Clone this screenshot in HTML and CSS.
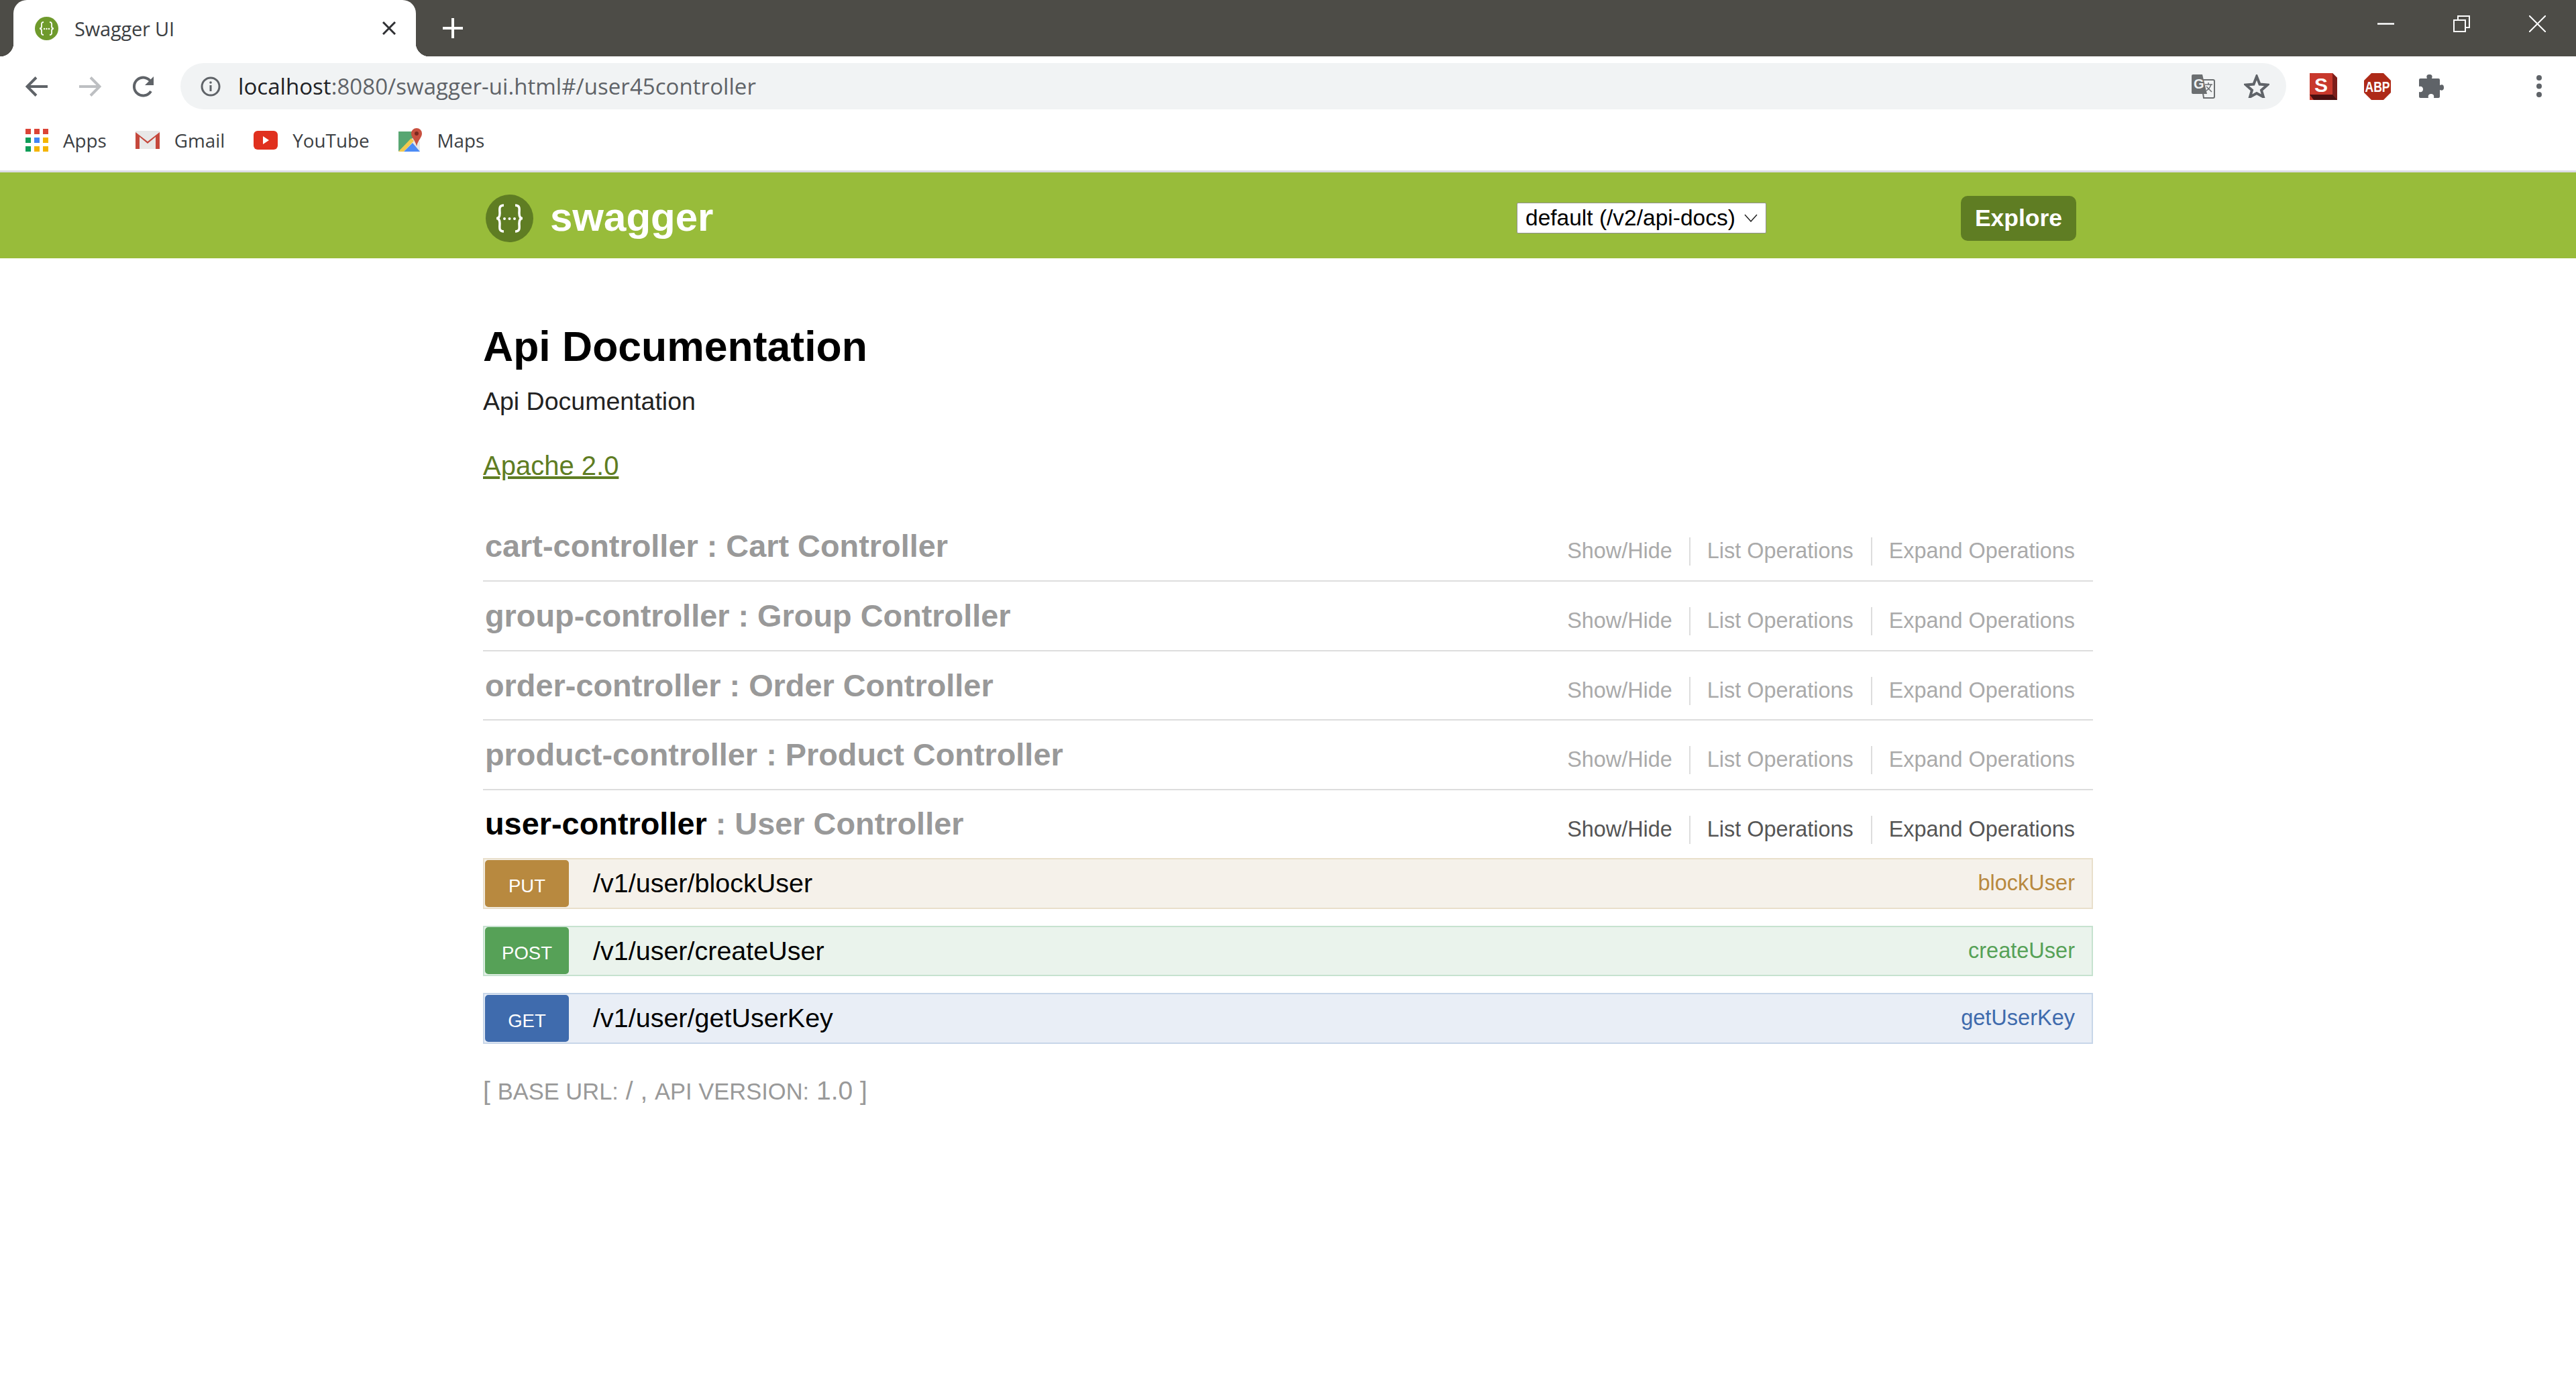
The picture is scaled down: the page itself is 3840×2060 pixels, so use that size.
FILE: index.html
```html
<!DOCTYPE html>
<html lang="en">
<head>
    <meta charset="utf-8"/>
    <title>Swagger UI</title>
    <link rel="stylesheet" href="styles.css">
</head>
<body>
    <div class="tabstrip">
        <div class="tab">
            <svg class="favicon" width="35" height="35" viewBox="0 0 35 35">
                <circle cx="17.5" cy="17.5" r="17.5" fill="#6f9a2c"/>
                <path d="M13 8c-4 0-3 3-3 6 0 3-1 3.500-3 3.500 2 0 3 .5 3 3.500 0 3-1 6 3 6M22 8c4 0 3 3 3 6 0 3 1 3.500 3 3.500-2 0-3 .5-3 3.500 0 3 1 6-3 6" fill="none" stroke="#fff" stroke-width="1.800"/>
                <circle cx="14" cy="18" r="1.200" fill="#fff"/><circle cx="17.500" cy="18" r="1.200" fill="#fff"/><circle cx="21" cy="18" r="1.200" fill="#fff"/>
            </svg>
            <span class="tab-title">Swagger UI</span>
            <svg class="tab-close" width="20" height="20" viewBox="0 0 20 20"><path d="M1 1l18 18M19 1L1 19" stroke="#2f3033" stroke-width="3"/></svg>
        </div>
        <svg class="new-tab" width="30" height="30" viewBox="0 0 30 30"><path d="M15 0v30M0 15h30" stroke="#fff" stroke-width="4"/></svg>
        <div class="window-controls">
            <svg width="25" height="25" viewBox="0 0 25 25"><path d="M0 12.500h25" stroke="#fff" stroke-width="2.500"/></svg>
            <svg width="25" height="25" viewBox="0 0 25 25"><path d="M1 7h17v17H1zM7 7V1h17v17h-6" fill="none" stroke="#fff" stroke-width="2"/></svg>
            <svg width="25" height="25" viewBox="0 0 25 25"><path d="M0 0l25 25M25 0L0 25" stroke="#fff" stroke-width="2"/></svg>
        </div>
    </div>

    <div class="toolbar">
        <svg class="nav-icon" width="33" height="30" viewBox="0 0 33 30"><path d="M33 15H3M16 1.500L2.500 15 16 28.500" fill="none" stroke="#5f6368" stroke-width="4"/></svg>
        <svg class="nav-icon" width="33" height="30" viewBox="0 0 33 30"><path d="M0 15h30M17 1.500L30.500 15 17 28.500" fill="none" stroke="#bdbfc2" stroke-width="4"/></svg>
        <svg class="nav-icon" width="33" height="32" viewBox="0 0 33 32"><path d="M27 23a13.500 13.500 0 1 1 0-14" fill="none" stroke="#5f6368" stroke-width="4"/><path d="M31 1v13H18z" fill="#5f6368"/></svg>
        <div class="omnibox">
            <svg class="info-icon" width="30" height="30" viewBox="0 0 30 30"><circle cx="15" cy="15" r="13" fill="none" stroke="#5f6368" stroke-width="3"/><path d="M15 13v9" stroke="#5f6368" stroke-width="3"/><circle cx="15" cy="9" r="1.800" fill="#5f6368"/></svg>
            <span class="url"><span class="url-host">localhost</span>:8080/swagger-ui.html#/user45controller</span>
            <svg class="translate-icon" width="35" height="36" viewBox="0 0 35 36">
                <path d="M14 8h18a2 2 0 0 1 2 2v23a2 2 0 0 1-2 2H18z" fill="#f1f3f4" stroke="#6b6e70" stroke-width="2"/>
                <path d="M2 0h14l7 29H2a2 2 0 0 1-2-2V2a2 2 0 0 1 2-2z" fill="#6b6e70"/>
                <text x="3" y="21" class="translate-g">G</text>
                <path d="M20 15h11M25 12v3M29 15c-2 6-5 8-7 9M22 18l8 8" fill="none" stroke="#6b6e70" stroke-width="1.500"/>
            </svg>
            <svg class="star-icon" width="38" height="35" viewBox="0 0 38 35"><path d="M19 3l4.500 11.500L35 15.500l-9 8 3 10L19 28 9 33.500l3-10-9-8 11.500-1z" fill="none" stroke="#5f6368" stroke-width="4"/></svg>
        </div>
        <svg class="ext-s" width="41" height="40" viewBox="0 0 41 40">
            <path d="M0 0h34l7 7v33H0z" fill="#c8382c"/>
            <path d="M34 0l7 7v33h-7z" fill="#7d1d1a"/>
            <path d="M0 32h34l7 8H6z" fill="#4a0f10"/>
            <text x="17" y="28" class="ext-s-letter">S</text>
        </svg>
        <svg class="ext-abp" width="40" height="40" viewBox="0 0 40 40">
            <path d="M11 0h18l11 11v18L29 40H11L0 29V11z" fill="#ae2a18"/>
            <text transform="translate(20 28) scale(.8 1)" class="ext-abp-text">ABP</text>
        </svg>
        <svg class="ext-puzzle" width="37" height="35" viewBox="0 0 37 35"><path d="M2 6h10c-2-5 1-6 3.500-6S21 1 19 6h10a2 2 0 0 1 2 2v8c5-2 6 1 6 3.500S36 25 31 23v10a2 2 0 0 1-2 2h-7c1-4-1-6-4-6s-5 2-4 6H2a2 2 0 0 1-2-2v-7c4 1 6-1 6-4s-2-5-6-4V8a2 2 0 0 1 2-2z" fill="#5f6368"/></svg>
        <svg class="menu-dots" width="8" height="33" viewBox="0 0 8 33"><circle cx="4" cy="4" r="4" fill="#5f6368"/><circle cx="4" cy="16.500" r="4" fill="#5f6368"/><circle cx="4" cy="29" r="4" fill="#5f6368"/></svg>
    </div>

    <div class="bookmarks">
        <div class="bookmark">
            <svg width="34" height="34" viewBox="0 0 34 34">
                <path d="M0 0h8v8H0z" fill="#db4437"/><path d="M13 0h8v8h-8z" fill="#db4437"/><path d="M26 0h8v8h-8z" fill="#db4437"/>
                <path d="M0 13h8v8H0z" fill="#0f9d58"/><path d="M13 13h8v8h-8z" fill="#4285f4"/><path d="M26 13h8v8h-8z" fill="#f4b400"/>
                <path d="M0 26h8v8H0z" fill="#0f9d58"/><path d="M13 26h8v8h-8z" fill="#f4b400"/><path d="M26 26h8v8h-8z" fill="#f4b400"/>
            </svg>
            <span>Apps</span>
        </div>
        <div class="bookmark">
            <svg width="36" height="27" viewBox="0 0 36 27">
                <path d="M0 0h36v27H0z" fill="#e8e8e8"/>
                <path d="M0 2l18 14L36 2v25h-6V9L18 19 6 9v18H0z" fill="#c5483c"/>
            </svg>
            <span>Gmail</span>
        </div>
        <div class="bookmark">
            <svg width="36" height="28" viewBox="0 0 36 28"><rect width="36" height="28" rx="6" fill="#e0301e"/><path d="M14 8l9 6-9 6z" fill="#fff"/></svg>
            <span>YouTube</span>
        </div>
        <div class="bookmark">
            <svg width="36" height="35" viewBox="0 0 36 35">
                <path d="M0 5h24v30H0z" fill="#58a672"/>
                <path d="M0 35L24 12l8 8v15z" fill="#e9e9e9"/>
                <path d="M0 35L19 15l4 4L8 35z" fill="#f2c94c"/>
                <path d="M8 35l13-13 11 13z" fill="#4c8bf5"/>
                <path d="M27 0a8 8 0 0 1 8 8c0 6-6 10-8 19-2-9-8-13-8-19a8 8 0 0 1 8-8z" fill="#c8503f"/>
                <circle cx="27" cy="8" r="3" fill="#7a2a20"/>
            </svg>
            <span>Maps</span>
        </div>
    </div>

    <header class="swagger-header">
        <div class="container header-inner">
            <svg class="logo" width="71" height="71" viewBox="0 0 71 71">
                <circle cx="35.500" cy="35.500" r="35.500" fill="#5f7d23"/>
                <path d="M27 16c-8 0-6 6-6 12 0 5-2 7.500-5 7.500 3 0 5 2.500 5 7.500 0 6-2 12 6 12M44 16c8 0 6 6 6 12 0 5 2 7.500 5 7.500-3 0-5 2.500-5 7.500 0 6 2 12-6 12" fill="none" stroke="#fff" stroke-width="3.500"/>
                <circle cx="28" cy="36" r="2" fill="#fff"/><circle cx="35.500" cy="36" r="2" fill="#fff"/><circle cx="43" cy="36" r="2" fill="#fff"/>
            </svg>
            <span class="logo-text">swagger</span>
            <div class="spec-select">
                <span>default (/v2/api-docs)</span>
                <svg width="20" height="12" viewBox="0 0 20 12"><path d="M1 1l9 10 9-10" fill="none" stroke="#222" stroke-width="1.500"/></svg>
            </div>
            <a class="explore">Explore</a>
        </div>
    </header>

    <main class="container">
        <h1>Api Documentation</h1>
        <p class="description">Api Documentation</p>
        <p class="license"><a>Apache 2.0</a></p>

        <div class="resource">
            <h2><span class="res-name">cart-controller</span> : Cart Controller</h2>
            <ul class="res-links"><li>Show/Hide</li><li>List Operations</li><li>Expand Operations</li></ul>
        </div>
        <div class="resource">
            <h2><span class="res-name">group-controller</span> : Group Controller</h2>
            <ul class="res-links"><li>Show/Hide</li><li>List Operations</li><li>Expand Operations</li></ul>
        </div>
        <div class="resource">
            <h2><span class="res-name">order-controller</span> : Order Controller</h2>
            <ul class="res-links"><li>Show/Hide</li><li>List Operations</li><li>Expand Operations</li></ul>
        </div>
        <div class="resource">
            <h2><span class="res-name">product-controller</span> : Product Controller</h2>
            <ul class="res-links"><li>Show/Hide</li><li>List Operations</li><li>Expand Operations</li></ul>
        </div>
        <div class="resource active">
            <h2><span class="res-name">user-controller</span> : User Controller</h2>
            <ul class="res-links"><li>Show/Hide</li><li>List Operations</li><li>Expand Operations</li></ul>
        </div>

        <div class="operations">
            <div class="op op-put">
                <span class="method">PUT</span>
                <span class="path">/v1/user/blockUser</span>
                <span class="op-name">blockUser</span>
            </div>
            <div class="op op-post">
                <span class="method">POST</span>
                <span class="path">/v1/user/createUser</span>
                <span class="op-name">createUser</span>
            </div>
            <div class="op op-get">
                <span class="method">GET</span>
                <span class="path">/v1/user/getUserKey</span>
                <span class="op-name">getUserKey</span>
            </div>
        </div>

        <p class="footer">[ <span class="footer-label">BASE URL:</span> / , <span class="footer-label">API VERSION:</span> 1.0 ]</p>
    </main>
</body>
</html>
```

FILE: styles.css
```css
body {
    margin: 0;
    background: #fff;
    font-family: "Liberation Sans", Arial, sans-serif;
    color: #000;
}

/* browser chrome */
.tabstrip {
    display: flex;
    align-items: center;
    height: 84px;
    background: #4d4c47;
}
.tab {
    position: relative;
    display: flex;
    align-items: center;
    box-sizing: border-box;
    width: 600px;
    height: 84px;
    margin-left: 20px;
    padding: 0 30px 0 32px;
    background: #fff;
    border-radius: 20px 20px 0 0;
}
.tab::before,
.tab::after {
    content: "";
    position: absolute;
    bottom: 0;
    width: 20px;
    height: 20px;
}
.tab::before {
    left: -20px;
    background: radial-gradient(circle at 0 0, #4d4c47 20px, #fff 20.5px);
}
.tab::after {
    right: -20px;
    background: radial-gradient(circle at 100% 0, #4d4c47 20px, #fff 20.5px);
}
.tab-title {
    margin-left: 24px;
    font-family: "Open Sans", sans-serif;
    font-size: 29px;
    letter-spacing: -0.2px;
    color: #3c4043;
}
.tab-close {
    margin-left: auto;
}
.new-tab {
    margin-left: 40px;
}
.window-controls {
    display: flex;
    gap: 88px;
    margin-left: auto;
    margin-right: 45px;
    padding-bottom: 13px;
}
.toolbar {
    display: flex;
    align-items: center;
    height: 89px;
    padding: 0 51px 0 38px;
}
.nav-icon {
    margin-right: 47px;
    flex: none;
}
.nav-icon:nth-child(3) {
    margin-right: 38px;
}
.omnibox {
    display: flex;
    align-items: center;
    flex: none;
    box-sizing: border-box;
    width: 3139px;
    height: 69px;
    padding: 0 25px 0 30px;
    background: #f1f3f4;
    border-radius: 35px;
}
.url {
    margin-left: 26px;
    font-family: "Open Sans", sans-serif;
    font-size: 33px;
    letter-spacing: 0.05px;
    color: #5f6368;
}
.url-host {
    color: #202124;
}
.translate-icon {
    margin-left: auto;
}
.translate-g {
    font-family: "Liberation Sans", sans-serif;
    font-weight: bold;
    font-size: 20px;
    fill: #f1f3f4;
}
.star-icon {
    margin-left: 43px;
}
.ext-s {
    margin-left: 35px;
}
.ext-s-letter {
    font-family: "Liberation Sans", sans-serif;
    font-weight: bold;
    font-size: 30px;
    fill: #fff;
    text-anchor: middle;
}
.ext-abp {
    margin-left: 40px;
}
.ext-abp-text {
    font-family: "Liberation Sans", sans-serif;
    font-weight: bold;
    font-size: 22px;
    fill: #fff;
    text-anchor: middle;
}
.ext-puzzle {
    margin-left: 42px;
}
.menu-dots {
    margin-left: auto;
}
.bookmarks {
    display: flex;
    align-items: center;
    gap: 43px;
    box-sizing: border-box;
    height: 84px;
    padding: 0 0 10px 38px;
    border-bottom: 3px solid #dcdce4;
    font-family: "Open Sans", sans-serif;
    font-size: 27.800px;
    color: #3c4043;
}
.bookmark {
    display: flex;
    align-items: center;
    gap: 22px;
}

/* swagger page */
.container {
    width: 2400px;
    margin: 0 auto;
}
.swagger-header {
    height: 128px;
    background: #98bc3a;
}
.header-inner {
    display: flex;
    align-items: center;
    box-sizing: border-box;
    height: 100%;
    padding-top: 8px;
}
.logo {
    margin-left: 4px;
}
.logo-text {
    margin-left: 25px;
    margin-bottom: 4px;
    font-size: 60px;
    font-weight: bold;
    color: #fff;
}
.spec-select {
    display: flex;
    align-items: center;
    justify-content: space-between;
    box-sizing: border-box;
    width: 372px;
    height: 46px;
    margin-left: auto;
    padding: 0 12px;
    background: #fff;
    border: 1px solid #8f8f8f;
    border-radius: 2px;
    font-size: 33.500px;
    color: #000;
}
.explore {
    box-sizing: border-box;
    width: 172px;
    height: 67px;
    margin-left: 290px;
    margin-right: 25px;
    background: #5f7d23;
    border-radius: 10px;
    color: #fff;
    font-size: 35.500px;
    font-weight: bold;
    line-height: 67px;
    text-align: center;
}
h1 {
    margin: 0;
    padding-top: 94px;
    font-size: 62.500px;
    line-height: 75px;
    font-weight: bold;
}
.description {
    margin: 19px 0 0;
    font-size: 37.500px;
    line-height: 50px;
    color: #222;
}
.license {
    margin: 46px 0 44.300px;
    font-size: 40px;
    line-height: 50px;
}
.license a {
    color: #5f7d23;
    text-decoration: underline;
}
.resource {
    display: flex;
    justify-content: space-between;
    box-sizing: border-box;
    height: 103.700px;
    border-bottom: 2px solid #ddd;
}
.resource.active {
    height: 101px;
    border-bottom: 0;
}
h2 {
    margin: 21px 0 0 3px;
    font-size: 46.875px;
    line-height: 60px;
    font-weight: bold;
    color: #999;
}
.active h2 {
    margin-top: 20px;
}
.active .res-name {
    color: #000;
}
.res-links {
    display: flex;
    height: 42px;
    margin: 38px 0 0;
    padding: 0;
    list-style: none;
    font-size: 32.400px;
    line-height: 41px;
    color: #aaa;
}
.res-links li {
    padding: 0 27px 0 25px;
    border-left: 2px solid #ddd;
}
.res-links li:first-child {
    padding-right: 25px;
    border-left: 0;
}
.res-links li:nth-child(2) {
    padding-right: 26px;
}
.active .res-links {
    color: #555;
}
.operations {
    display: flex;
    flex-direction: column;
    gap: 25px;
}
.op {
    display: flex;
    align-items: center;
    box-sizing: border-box;
    height: 75.500px;
    padding: 0 25px 0 1px;
    border: 2px solid;
}
.method {
    flex: none;
    box-sizing: border-box;
    width: 125px;
    height: 70px;
    padding-top: 4px;
    border-radius: 5px;
    color: #fff;
    font-size: 27.500px;
    line-height: 70px;
    text-align: center;
}
.path {
    margin-left: 36px;
    font-size: 39.500px;
}
.op-name {
    margin-left: auto;
    font-size: 32.500px;
}
.op-put { background: #f5f1ea; border-color: #e9dfcb; }
.op-put .method { background: #b8893f; }
.op-put .op-name { color: #b8893f; }
.op-post { background: #eaf3ec; border-color: #c6e2cf; }
.op-post .method { background: #56a157; }
.op-post .op-name { color: #56a157; }
.op-get { background: #e9eef6; border-color: #c7d6e9; }
.op-get .method { background: #3f6bad; }
.op-get .op-name { color: #3f6bad; }
.footer {
    margin: 45px 0 0;
    font-size: 39px;
    line-height: 50px;
    color: #999;
}
.footer-label {
    font-size: 34.500px;
}
```
